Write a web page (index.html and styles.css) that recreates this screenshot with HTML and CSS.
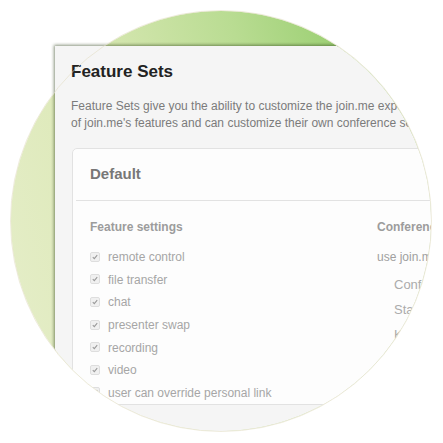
FILE: index.html
```html
<!DOCTYPE html>
<html lang="en">
<head>
    <meta charset="UTF-8">
    <meta name="viewport" content="width=device-width, initial-scale=1.0">
    <title>Feature Sets</title>
    <link rel="stylesheet" href="styles.css">
</head>
<body>
<div class="stage">
    <div class="lens"></div>

    <div class="shot">
        <h1>Feature Sets</h1>
        <p class="intro">
            Feature Sets give you the ability to customize the join.me experience for groups of users.<br>
            of join.me's features and can customize their own conference settings.
        </p>

        <div class="card">
            <h2 class="card-title">Default</h2>
            <div class="card-body">
                <div class="col">
                    <h3>Feature settings</h3>
                    <ul class="checks">
                        <li><span class="box"><svg viewBox="0 0 9 9"><path d="M2 4.7 L3.7 6.4 L7 2.3"/></svg></span>remote control</li>
                        <li><span class="box"><svg viewBox="0 0 9 9"><path d="M2 4.7 L3.7 6.4 L7 2.3"/></svg></span>file transfer</li>
                        <li><span class="box"><svg viewBox="0 0 9 9"><path d="M2 4.7 L3.7 6.4 L7 2.3"/></svg></span>chat</li>
                        <li><span class="box"><svg viewBox="0 0 9 9"><path d="M2 4.7 L3.7 6.4 L7 2.3"/></svg></span>presenter swap</li>
                        <li><span class="box"><svg viewBox="0 0 9 9"><path d="M2 4.7 L3.7 6.4 L7 2.3"/></svg></span>recording</li>
                        <li><span class="box"><svg viewBox="0 0 9 9"><path d="M2 4.7 L3.7 6.4 L7 2.3"/></svg></span>video</li>
                        <li><span class="box"><svg viewBox="0 0 9 9"><path d="M2 4.7 L3.7 6.4 L7 2.3"/></svg></span>user can override personal link</li>
                    </ul>
                </div>
                <div class="col">
                    <h3>Conference settings</h3>
                    <p class="conf-lead">use join.me conference lines</p>
                    <ul class="conf-list">
                        <li>Conference number</li>
                        <li>Start with audio</li>
                        <li>Keep lines open</li>
                    </ul>
                </div>
            </div>
        </div>
    </div>

    <div class="rim"></div>
</div>
</body>
</html>
```

FILE: styles.css
```css
body {
    margin: 0;
    background-color: #ffffff;
    font-family: "Liberation Sans", Arial, sans-serif;
}

.stage {
    position: relative;
    width: 443px;
    height: 443px;
    overflow: hidden;
}

/* green disc behind the screenshot */
.lens {
    width: 420px;
    height: 420px;
    margin: 11px;
    border-radius: 50%;
    background: linear-gradient(75deg, #e6eecb 0%, #dde9b8 30%, #b9dc92 62%, #8fca66 90%);
}

.rim {
    position: absolute;
    left: 10px;
    top: 10px;
    width: 420px;
    height: 420px;
    border-radius: 50%;
    border: 1px solid rgba(226, 222, 196, 0.6);
    pointer-events: none;
}

/* the screenshot pokes out top-left, cut by the disc bottom-right */
.shot {
    position: absolute;
    left: 55px;
    top: 46px;
    width: 390px;
    height: 400px;
    box-sizing: border-box;
    padding: 16px 16px;
    background-color: #f5f5f5;
    box-shadow: -1px -1px 3px rgba(40, 60, 20, 0.55);
    clip-path: path('M-4 -4 H275.8 A210 210 0 1 1 -4 298.3 Z');
}

h1 {
    margin: 0;
    font-size: 17px;
    line-height: 20px;
    font-weight: bold;
    color: #222;
}

.intro {
    margin: 16px 0 16px;
    font-size: 12px;
    line-height: 17px;
    color: #7b7b7b;
    white-space: nowrap;
}

.card {
    margin-left: 1px;
    width: 600px;
    background-color: #fdfdfd;
    border: 1px solid #e2e2e2;
    border-radius: 5px;
}

.card-title {
    margin: 0 3px;
    padding: 16px 0 17px 14px;
    font-size: 15px;
    line-height: 18px;
    color: #777;
    border-bottom: 1px solid #e2e2e2;
}

.card-body {
    display: grid;
    grid-template-columns: 287px 1fr;
    padding: 19px 0 0 17px;
}

h3 {
    margin: 0 0 11px;
    font-size: 12px;
    line-height: 15px;
    color: #9c9c9c;
    white-space: nowrap;
}

.checks {
    list-style: none;
    margin: 0;
    padding: 0;
}

.checks li {
    display: flex;
    align-items: center;
    height: 22.6px;
    font-size: 12px;
    color: #a6a6a6;
}

.box {
    width: 8px;
    height: 8px;
    margin-right: 8px;
    margin-top: -1px;
    border: 1px solid #dedede;
    border-radius: 2px;
    background-color: #f0f0f0;
}

.box svg {
    display: block;
    width: 8px;
    height: 8px;
}

.box path {
    fill: none;
    stroke: #999;
    stroke-width: 1.2;
}

.conf-lead {
    margin: 0;
    font-size: 12px;
    line-height: 22.6px;
    color: #a0a0a0;
    white-space: nowrap;
}

.conf-list {
    list-style: none;
    margin: 3px 0 0;
    padding: 0 0 0 17px;
}

.conf-list li {
    font-size: 13px;
    line-height: 25px;
    color: #ababab;
    white-space: nowrap;
}
```
